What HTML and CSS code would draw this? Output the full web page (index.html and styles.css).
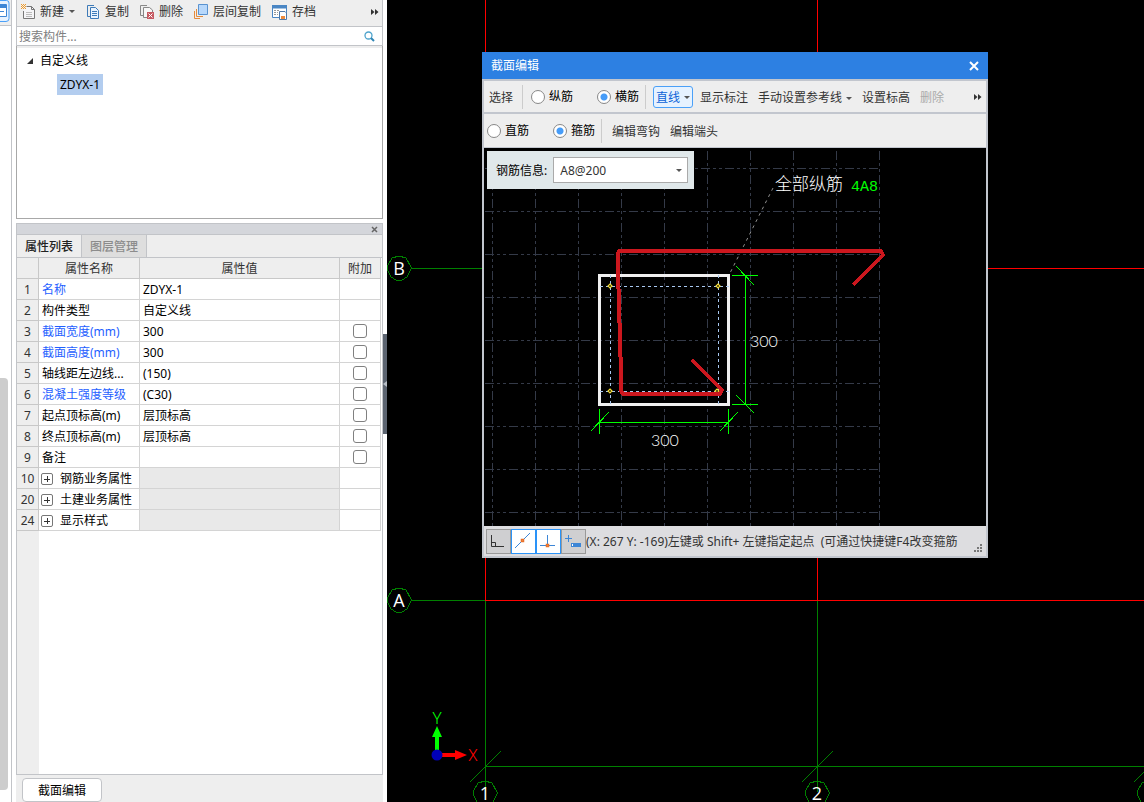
FILE: index.html
```html
<!DOCTYPE html>
<html lang="zh-CN">
<head>
<meta charset="utf-8">
<title>截面编辑</title>
<link rel="stylesheet" href="styles.css">
</head>
<body>
<div class="app">
  <aside class="rail">
    <div class="rail-head">
      <svg width="11" height="25" viewBox="0 0 11 25"><path d="M0 .5H6.500Q9 .5 9 3V18.500Q9 21.500 6 21.500H0" fill="#e6f2ff" stroke="#4aa0f8"/><path d="M0 4.500H6.500V16.500H0" fill="#fff" stroke="#3d86d6"/><path d="M0 5H6V8H0Z" fill="#3d86d6"/><path d="M0 11.500H4" stroke="#3d86d6"/></svg>
    </div>
    <div class="rail-thumb"></div>
  </aside>

  <section class="panel">
    <div class="tools">
      <button class="tool"><svg width="14" height="16" viewBox="0 0 14 16"><path d="M5.500 2.500H10.500L13.500 5.500V14.500H2.500V7" fill="#f5f5f7" stroke="#777"/><path d="M10.500 2.500V5.500H13.500" fill="none" stroke="#777"/><path d="M5 8.500H11M5 10.500H11M5 12.500H11" stroke="#bbb"/><path d="M0 .5H5M0 2.500H5M0 4.500H5" stroke="#f09a28" stroke-dasharray="1 1"/><path d="M1 1.500H5M1 3.500H5" stroke="#f09a28" stroke-dasharray="1 1"/></svg>新建<i class="caret"></i></button>
      <button class="tool"><svg width="14" height="16" viewBox="0 0 14 16"><path d="M8 1.500H1.500V12.500H4" fill="none" stroke="#3d7ab8"/><path d="M4.500 3.500H9.500L12.500 6.500V14.500H4.500Z" fill="#e8f3ff" stroke="#3d7ab8"/><path d="M6 7.500H11M6 9.500H11M6 11.500H11" stroke="#3d7ab8"/></svg>复制</button>
      <button class="tool"><svg width="14" height="16" viewBox="0 0 14 16"><path d="M7 1.500H.5V11.500H3" fill="none" stroke="#888"/><path d="M7 13.500H3.500V3.500H9.500L12.500 6V8" fill="#f7f7f7" stroke="#888"/><path d="M7 8H14V15H7Z" fill="#c65a62"/><path d="M8.500 9.500L12.500 13.500M12.500 9.500L8.500 13.500" stroke="#fff"/></svg>删除</button>
      <button class="tool"><svg width="14" height="16" viewBox="0 0 14 16"><path d="M.5 7V14.500H6M2.500 5V12.500H9" fill="none" stroke="#e48b3c"/><path d="M4.500 .5H13.500V10.500H4.500Z" fill="#b8d8fb" stroke="#5a93d0"/></svg>层间复制</button>
      <button class="tool"><svg width="15" height="16" viewBox="0 0 15 16"><path d="M.5 1.500H14.500V13.500H.5Z" fill="#fff" stroke="#4a86c4"/><path d="M0 1H15V4.500H0Z" fill="#4a86c4"/><path d="M2 6.500H7M2 8.500H6M2 10.500H6" stroke="#999" stroke-dasharray="2 1"/><path d="M7.500 7.500H13L14.500 9V15.500H7.500Z" fill="#fff" stroke="#4f79a8"/><path d="M9 12H13V15H9Z" fill="#ee8a3a"/></svg>存档</button>
      <button class="more" aria-label="更多"><svg width="8" height="6"><path d="M0 0L3.500 3L0 6ZM4 0L7.500 3L4 6Z" fill="#333"/></svg></button>
    </div>
    <div class="search">
      <input type="text" placeholder="搜索构件..." aria-label="搜索构件">
      <svg width="11" height="11" viewBox="0 0 11 11"><circle cx="4.500" cy="4.500" r="3.500" fill="none" stroke="#4da3cc" stroke-width="1.300"/><path d="M7 7L10 10" stroke="#2f86b5" stroke-width="2"/></svg>
    </div>
    <div class="tree">
      <div class="tree-root"><svg width="6" height="6"><path d="M6 0V6H0Z" fill="#333"/></svg>自定义线</div>
      <div class="tree-leaf">ZDYX-1</div>
    </div>

    <div class="dock-bar"><button class="dock-close" aria-label="关闭"><svg width="7" height="7"><path d="M1 1L6 6M6 1L1 6" stroke="#666" stroke-width="1.500"/></svg></button></div>
    <div class="tabs">
      <button class="tab tab-on">属性列表</button>
      <button class="tab">图层管理</button>
    </div>
    <div class="props">
      <table>
        <colgroup><col class="c-num"><col class="c-name"><col><col class="c-add"></colgroup>
        <thead><tr><th></th><th>属性名称</th><th>属性值</th><th>附加</th></tr></thead>
        <tbody>
          <tr><th>1</th><td class="key">名称</td><td>ZDYX-1</td><td></td></tr>
          <tr><th>2</th><td>构件类型</td><td>自定义线</td><td></td></tr>
          <tr><th>3</th><td class="key">截面宽度(mm)</td><td>300</td><td class="add"><input type="checkbox" aria-label="附加 截面宽度"></td></tr>
          <tr><th>4</th><td class="key">截面高度(mm)</td><td>300</td><td class="add"><input type="checkbox" aria-label="附加 截面高度"></td></tr>
          <tr><th>5</th><td>轴线距左边线...</td><td>(150)</td><td class="add"><input type="checkbox" aria-label="附加 轴线距左边线"></td></tr>
          <tr><th>6</th><td class="key">混凝土强度等级</td><td>(C30)</td><td class="add"><input type="checkbox" aria-label="附加 混凝土强度等级"></td></tr>
          <tr><th>7</th><td>起点顶标高(m)</td><td>层顶标高</td><td class="add"><input type="checkbox" aria-label="附加 起点顶标高"></td></tr>
          <tr><th>8</th><td>终点顶标高(m)</td><td>层顶标高</td><td class="add"><input type="checkbox" aria-label="附加 终点顶标高"></td></tr>
          <tr><th>9</th><td>备注</td><td></td><td class="add"><input type="checkbox" aria-label="附加 备注"></td></tr>
          <tr><th>10</th><td><div class="group"><button class="plus" aria-label="展开"></button>钢筋业务属性</div></td><td class="off"></td><td></td></tr>
          <tr><th>20</th><td><div class="group"><button class="plus" aria-label="展开"></button>土建业务属性</div></td><td class="off"></td><td></td></tr>
          <tr><th>24</th><td><div class="group"><button class="plus" aria-label="展开"></button>显示样式</div></td><td class="off"></td><td></td></tr>
        </tbody>
      </table>
    </div>
    <div class="foot"><button class="edit">截面编辑</button></div>
  </section>

  <div class="splitter"><button class="handle" aria-label="收起"><svg width="4" height="6"><path d="M4 0V6L0 3Z" fill="#b8bec6"/></svg></button></div>

  <main class="view">
    <svg class="scene">
      <defs><path id="bubble" d="M0-12L7-10L12-1V1L8 9L3 12H-3L-8 9L-12 1V-1L-7-10Z"/></defs>
      <g transform="translate(-387 0)">
        <g class="axis-red">
          <path d="M485.500 0V600M817.500 0V600M485 268.500H3000M485 600.500H3000"/>
        </g>
        <g class="axis-green">
          <path d="M411 268.500H485M411 600.500H485M485.500 601V792M817.500 601V792M485 766.500H3000"/>
          <path d="M470 782L501 751M802 782L833 751M1134 782L1165 751"/>
          <use href="#bubble" x="399" y="268"/><use href="#bubble" x="399" y="600"/>
          <use href="#bubble" x="485" y="793"/><use href="#bubble" x="817" y="793"/><use href="#bubble" x="1149" y="793"/>
        </g>
        <g class="mark"><text x="399" y="275">B</text><text x="399" y="607">A</text><text x="485" y="800">1</text><text x="817" y="800">2</text></g>
        <path d="M435 752V737H432L437 726L442 737H439V752Z" fill="#0f0"/>
        <path d="M441 753H455V750L467 755L455 760V757H441Z" fill="#f00"/>
        <circle cx="437" cy="755" r="5.500" fill="#0000b8"/>
        <text class="ucs" x="437" y="724" fill="#0f0">Y</text>
        <text class="ucs" x="473" y="761" fill="#f00">X</text>
      </g>
    </svg>

    <div class="dialog" role="dialog" aria-label="截面编辑">
      <header class="title"><span>截面编辑</span><button aria-label="关闭"><svg width="10" height="10"><path d="M1 1L9 9M9 1L1 9" stroke="#fff" stroke-width="2"/></svg></button></header>
      <div class="bar">
        <button class="cmd">选择</button>
        <i class="sep"></i>
        <label class="opt"><input type="radio" name="dir">纵筋</label>
        <label class="opt"><input type="radio" name="dir" checked>横筋</label>
        <i class="sep sep-near"></i>
        <button class="cmd cmd-on">直线<i class="caret"></i></button>
        <button class="cmd">显示标注</button>
        <button class="cmd">手动设置参考线<i class="caret"></i></button>
        <button class="cmd">设置标高</button>
        <button class="cmd" disabled>删除</button>
        <button class="more" aria-label="更多"><svg width="8" height="6"><path d="M0 0L3.500 3L0 6ZM4 0L7.500 3L4 6Z" fill="#333"/></svg></button>
      </div>
      <div class="bar bar-sub">
        <label class="opt"><input type="radio" name="kind">直筋</label>
        <label class="opt"><input type="radio" name="kind" checked>箍筋</label>
        <i class="sep sep-near"></i>
        <button class="cmd">编辑弯钩</button>
        <button class="cmd">编辑端头</button>
      </div>
      <div class="draw">
        <svg class="scene">
          <g transform="translate(-484 -148)">
            <path class="grid" d="M492.500 151V526M535.500 151V526M578.500 151V526M621.500 151V526M664.500 151V526M707.500 151V526M750.500 151V526M793.500 151V526M836.500 151V526M879.500 151V526"/>
            <path class="grid" d="M485 168.500H880M485 211.500H880M485 254.500H880M485 297.500H880M485 340.500H880M485 383.500H880M485 426.500H880M485 469.500H880M485 512.500H880"/>
            <path d="M773 188L729 275" stroke="#909090" stroke-dasharray="3 4"/>
            <path d="M599.500 275.500H728.500V404.500H599.500Z" fill="none" stroke="#f0f0f0" stroke-width="3"/>
            <path d="M610.500 275V404M718.500 275V404M600 286.500H729M600 391.500H729" stroke="#a8c8f0" stroke-dasharray="3 3"/>
            <path d="M610 284L612 286L610 288L608 286ZM718 284L720 286L718 288L716 286ZM610 389L612 391L610 393L608 391ZM717 389L719 391L717 393L715 391Z" fill="#000" stroke="#f5dc32" stroke-width="1.200"/>
            <path d="M853 285L883 255L881 251H619L618 253V288L619 290V322L620 324V356L621 358V391L623 394H720L722 390L692 360" fill="none" stroke="#cc171e" stroke-width="4" stroke-linejoin="round" shape-rendering="crispEdges"/>
            <path class="dim" d="M745.500 275V405M732 275.500H758M732 404.500H758M736 266L754 285M736 395L754 413M599 422.500H729M599.500 409V434M728.500 409V434M591 431L609 412M720 431L738 412"/>
            <text class="num" x="750" y="347">300</text>
            <text class="num" x="651" y="446">300</text>
            <text class="note" x="775" y="190">全部纵筋</text>
            <text class="spec" x="851" y="191">4A8</text>
          </g>
        </svg>
        <div class="info">
          <label for="rebar">钢筋信息:</label>
          <div class="pick"><select id="rebar"><option>A8@200</option></select><i class="caret"></i></div>
        </div>
      </div>
      <footer class="status">
        <button class="snap" aria-label="正交"><svg width="23" height="23" viewBox="1 1 23 23"><path d="M5.500 6V17.500H18M5.500 13.500H9.500V17.500" fill="none" stroke="#333"/></svg></button>
        <button class="snap snap-on" aria-label="中点"><svg width="23" height="23" viewBox="1 1 23 23"><path d="M4 19L19 4" stroke="#3d86d6"/><path d="M10.500 10.500H12.500V12.500H10.500Z" fill="#ffc8a0" stroke="#e8702a" stroke-width="1.500"/></svg></button>
        <button class="snap snap-on" aria-label="垂点"><svg width="23" height="23" viewBox="1 1 23 23"><path d="M11.500 6V16M4 16.500H19" stroke="#3d86d6"/><path d="M10.500 15.500H12.500V17.500H10.500Z" fill="#ffc8a0" stroke="#e8702a" stroke-width="1.500"/></svg></button>
        <button class="snap" aria-label="动态输入"><svg width="23" height="23" viewBox="1 1 23 23"><path d="M4 9.500H11M7.500 6V13" stroke="#3d86d6"/><path d="M10 14H20V18H10Z" fill="#3d86d6"/><path d="M11 15H12V17H11Z" fill="#fff"/></svg></button>
        <span class="tip">(X: 267 Y: -169)左键或 Shift+ 左键指定起点&nbsp; (可通过快捷键F4改变箍筋</span>
        <svg class="grip" width="8" height="8"><path d="M6 0H8V2H6ZM3 3H5V5H3ZM6 3H8V5H6ZM0 6H2V8H0ZM3 6H5V8H3ZM6 6H8V8H6Z" fill="#777"/></svg>
      </footer>
    </div>
  </main>
</div>
</body>
</html>
```

FILE: styles.css
```css
* { box-sizing: border-box; }
body { margin: 0; }
body, button, input, select {
  font-family: "Noto Sans", "Noto Sans CJK SC", sans-serif;
  font-size: 12px;
  line-height: 16px;
  color: #000;
}
button { border: 0; padding: 0; background: none; color: #333; white-space: nowrap; }
svg { display: block; flex: none; }
.app { display: flex; height: 100vh; overflow: hidden; background: #fff; }

.caret { flex: none; border: 3px solid transparent; border-top-color: #555; border-bottom-width: 0; }
.more { margin-left: auto; }

.rail { width: 12px; flex: none; display: flex; flex-direction: column; border-right: 1px solid #c2c4c8; }
.rail-head { height: 26px; flex: none; background: #eee; border-bottom: 1px solid #c2c4c8; }
.rail-thumb { width: 8px; flex: 1; margin: 352px 0 12px; background: #cdcdcd; border-radius: 0 4px 4px 0; }

.panel { width: 367px; flex: none; margin-left: 4px; display: flex; flex-direction: column; }
.tools { height: 27px; flex: none; display: flex; align-items: center; gap: 11px; padding: 0 3px 3px 4px; background: #eee; border: solid #c2c4c8; border-width: 0 1px 1px; }
.tool { display: flex; align-items: center; gap: 5px; }
.search { height: 19px; flex: none; display: flex; align-items: center; padding-right: 7px; border: solid #c2c4c8; border-width: 0 1px 1px; }
.search input { flex: 1; min-width: 0; border: 0; padding: 2px 2px 0; outline: 0; }
.search input::placeholder { color: #808080; }
.tree { height: 173px; flex: none; padding: 4px 10px; border: solid #a8a8a8; border-width: 0 1px 1px; box-shadow: inset 0 2px #eee; }
.tree-root { display: flex; align-items: center; gap: 7px; height: 22px; }
.tree-leaf { width: max-content; margin: 2px 0 0 30px; padding: 3px 3px 0; height: 21px; background: #b3cdef; }

.dock-bar { height: 12px; flex: none; margin-top: 4px; display: flex; align-items: center; justify-content: flex-end; padding-right: 4px; background: #d4d6db; border: 1px solid #c2c4c8; }
.tabs { height: 22px; flex: none; display: flex; background: #eee; border: solid #c2c4c8; border-width: 0 1px; }
.tab { padding: 2px 8px 0; border-right: 1px solid #c2c4c8; font-weight: 500; color: #8c8c8c; background: #dedede; }
.tab-on { color: #222; background: #eee; }
.props { flex: 1; min-height: 0; border: 1px solid #c2c4c8; background: linear-gradient(to right, #eee 22px, #fff 22px); }
table { width: calc(100% - 1px); border-collapse: separate; border-spacing: 0; table-layout: fixed; }
.c-num { width: 22px; }
.c-name { width: 101px; }
.c-add { width: 41px; }
th, td { height: 21px; padding: 2px 0 0 3px; border: solid #d4d4d4; border-width: 0 1px 1px 0; white-space: nowrap; line-height: 18px; text-align: left; font-weight: 400; overflow: hidden; }
th { padding: 2px 0 0; text-align: center; background: #eee; color: #333; border-color: #c8c8c8; }
.key { color: #1f5fff; }
.off { background: #e9e9e9; }
.add { padding: 0; }
.add input { appearance: none; display: block; width: 14px; height: 14px; margin: 0 auto; border: 1px solid #808080; border-radius: 3px; background: #fff; }
.group { display: flex; align-items: center; gap: 7px; }
.plus { width: 12px; height: 12px; flex: none; border: 1px solid #777; border-radius: 2px; background: linear-gradient(#333, #333) center / 6px 1px no-repeat, linear-gradient(#333, #333) center / 1px 6px no-repeat, #fff; }
.group .plus { margin-left: -1px; }
.foot { height: 27px; flex: none; padding: 3px 6px 0; background: #eee; }
.edit { width: 80px; height: 24px; padding-top: 1px; border: 1px solid #c2c4c8; border-radius: 4px; background: #fff; color: #000; }

.splitter { width: 4px; flex: none; display: flex; flex-direction: column; justify-content: flex-start; padding-top: 334px; }
.handle { height: 100px; width: 4px; background: #5c6470; }

.view { position: relative; flex: 1; min-width: 0; background: #000; overflow: hidden; }
.scene { width: 100%; height: 100%; }
.axis-red, .axis-green { fill: none; shape-rendering: crispEdges; }
.axis-red { stroke: #f00; }
.axis-green { stroke: #008000; }
.mark { font: 18px "Open Sans", sans-serif; fill: #fff; text-anchor: middle; }
.ucs { font: 300 16px Roboto, sans-serif; text-anchor: middle; }

.dialog { position: absolute; left: 95px; top: 52px; width: 506px; display: flex; flex-direction: column; border: solid #c2c6ce; border-width: 0 2px 2px; }
.title { height: 27px; margin: 0 -2px; padding: 0 9px; display: flex; align-items: center; justify-content: space-between; background: #2d80e2; color: #fff; }
.bar { height: 35px; display: flex; align-items: center; padding: 1px 4px 0 5px; background: #eee; border: solid #c2c6ce; border-width: 2px 0; }
.bar-sub { height: 34px; padding: 0 3px; border-width: 0 0 1px; }
.sep { width: 1px; height: 24px; margin: 0 8px 0 9px; background: #ccc; }
.sep-near { margin: 0 7px 0 6px; }
.opt { display: flex; align-items: center; gap: 4px; margin-right: 24px; }
.opt:has(+ .sep) { margin-right: 0; }
.opt input { appearance: none; width: 14px; height: 14px; margin: 0; border: 1px solid #888; border-radius: 50%; background: #fff; }
.opt input:checked { background: radial-gradient(circle, #469cf8 3px, #fff 4px); }
.cmd { display: flex; align-items: center; gap: 4px; margin-right: 10px; padding-top: 2px; }
.cmd:has(+ .sep) { margin-right: 0; }
.cmd:disabled { color: #aaa; }
.cmd-on { height: 22px; margin-right: 7px; padding: 1px 2px 0; border: 1px solid #4aa0f8; border-radius: 3px; background: #e6f2ff; color: #0b63d6; }
.bar-sub .sep-near { margin-right: 10px; }

.draw { position: relative; height: 378px; background: #000; }
.grid { stroke: #343a48; stroke-dasharray: 9 3 3 3 3 3; }
.dim { stroke: #0f0; fill: none; shape-rendering: crispEdges; }
.num { font: 300 16px Lato, sans-serif; fill: #fff; }
.note { font: 300 17px "Noto Sans CJK SC", sans-serif; fill: #fff; }
.spec { font: 15px "Liberation Mono", monospace; fill: #0f0; }
.info { position: absolute; left: 3px; top: 3px; height: 38px; display: flex; align-items: center; gap: 6px; padding: 0 6px 0 9px; background: #e0e8ea; }
.info label { padding-top: 2px; }
.pick { position: relative; width: 135px; }
.pick select { appearance: none; width: 100%; height: 26px; padding: 2px 6px 0; border: 1px solid #aaa; border-radius: 0; background: #fff; color: #333; }
.pick .caret { position: absolute; right: 6px; top: 12px; }

.status { height: 30px; display: flex; align-items: center; padding: 0 4px 0 2px; background: #dddde0; color: #333; }
.snap { width: 25px; height: 25px; flex: none; border: 1px solid #999; background: #cfcfd1; display: grid; place-items: center; overflow: hidden; }
.snap-on { border-color: #2a93f8; background: #fff; }
.tip { flex: 1; min-width: 0; padding-top: 2px; overflow: hidden; white-space: nowrap; color: #333; }
.grip { align-self: flex-end; margin: 0 0 4px 8px; }
```
